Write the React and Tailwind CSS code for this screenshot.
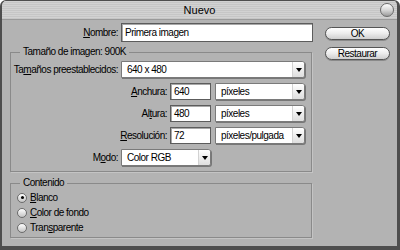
import React from 'react'

// Photoshop "Nuevo" (new document) dialog, Aqua-ish grey style

function Mn({ children }) {
    return <span className="underline underline-offset-[1px]">{children}</span>
}

function TextInput({ value, className = '' }) {
    return (
        <div
            className={`flex h-[17px] items-center border border-[#5c5c5c] bg-white px-[3px] shadow-[inset_1px_1px_0_#a8a8a8] ${className}`}
        >
            {value}
        </div>
    )
}

function Select({ value, className = '' }) {
    return (
        <div
            className={`flex h-[17px] rounded-r-[3px] border border-[#7a7a7a] bg-white shadow-[1px_1px_0_#777] ${className}`}
        >
            <div className="flex flex-1 items-center px-[5px]">{value}</div>
            <div className="flex w-[12px] items-center justify-center rounded-r-[2px] border-l border-[#d2d2d2] bg-gradient-to-b from-white to-[#dedede]">
                <span className="h-0 w-0 border-x-[3px] border-t-[4px] border-x-transparent border-t-black" />
            </div>
        </div>
    )
}

function Row({ label, children }) {
    return (
        <div className="flex h-[17px] items-center">
            <div className="w-[110px] pr-[3px] text-right whitespace-nowrap">{label}</div>
            {children}
        </div>
    )
}

function Radio({ checked, children }) {
    return (
        <div className="flex h-[15px] items-center gap-[3px] pl-[6px]">
            <span className="flex h-[10px] w-[10px] items-center justify-center rounded-full border border-[#6b6b6b] bg-gradient-to-b from-white to-[#c4c4c4]">
                {checked && <span className="h-[3px] w-[3px] rounded-full bg-black" />}
            </span>
            <span>{children}</span>
        </div>
    )
}

function PillButton({ children }) {
    return (
        <div className="flex h-[13px] w-[65px] items-center justify-center rounded-full border border-[#555] bg-gradient-to-b from-white via-[#ececec] to-[#cfcfcf] text-[10px] shadow-[0_1px_0_#8a8a8a]">
            {children}
        </div>
    )
}

export default function App() {
    return (
        <div className="flex h-[250px] w-[400px] flex-col overflow-hidden rounded-t-[6px] border-t border-r-[3px] border-b-[4px] border-l-[2px] border-[#4e4e4e] bg-[#b3b3b3] font-['Liberation_Sans',Arial,sans-serif] text-[10px] tracking-[-0.5px] text-black">
            {/* title bar */}
            <div className="relative flex h-[19px] shrink-0 items-center justify-center border-b border-[#9a9a9a] bg-[repeating-linear-gradient(0deg,#c6c6c6_0px,#c6c6c6_1px,#d2d2d2_1px,#d2d2d2_2px)]">
                <span className="text-[11px] tracking-normal">Nuevo</span>
                <span className="absolute top-[2px] right-[3px] h-[14px] w-[14px] rounded-full border border-[#6a6a6a] bg-gradient-to-b from-white via-[#d8d8d8] to-[#9c9c9c]" />
            </div>

            <div className="flex flex-1">
                {/* left column */}
                <div className="flex w-[316px] flex-col pt-[3px]">
                    <div className="flex h-[19px] items-center">
                        <div className="w-[119px] pr-[3px] text-right">
                            <Mn>N</Mn>ombre:
                        </div>
                        <TextInput value="Primera imagen" className="h-[19px] w-[192px]" />
                    </div>

                    <fieldset className="mt-[4px] ml-[8px] w-[302px] border border-[#8a8a8a] px-[0px] pt-[3px] pb-[5px] shadow-[1px_1px_0_#c4c4c4]">
                        <legend className="ml-[9px] px-[3px] leading-[12px]">Tamaño de imagen: 900K</legend>
                        <div className="flex flex-col gap-[5px]">
                            <Row
                                label={
                                    <>
                                        Ta<Mn>m</Mn>años preestablecidos:
                                    </>
                                }
                            >
                                <Select value="640 x 480" className="w-[184px]" />
                            </Row>
                            {[
                                [<><Mn>A</Mn>nchura:</>, '640', 'píxeles'],
                                [<>Al<Mn>t</Mn>ura:</>, '480', 'píxeles'],
                                [<><Mn>R</Mn>esolución:</>, '72', 'píxeles/pulgada'],
                            ].map(([label, num, unit], i) => (
                                <div key={i} className="flex h-[17px] items-center">
                                    <div className="w-[159px] pr-[3px] text-right">{label}</div>
                                    <TextInput value={num} className="w-[41px]" />
                                    <Select value={unit} className="ml-[4px] w-[90px]" />
                                </div>
                            ))}
                            <Row
                                label={
                                    <>
                                        M<Mn>o</Mn>do:
                                    </>
                                }
                            >
                                <Select value="Color RGB" className="w-[90px]" />
                            </Row>
                        </div>
                    </fieldset>

                    <fieldset className="mt-[5px] ml-[8px] w-[302px] border border-[#8a8a8a] pt-[1px] pb-[2px] shadow-[1px_1px_0_#c4c4c4]">
                        <legend className="ml-[9px] px-[3px] leading-[12px]">Contenido</legend>
                        <Radio checked>
                            <Mn>B</Mn>lanco
                        </Radio>
                        <Radio>
                            <Mn>C</Mn>olor de fondo
                        </Radio>
                        <Radio>
                            Tran<Mn>s</Mn>parente
                        </Radio>
                    </fieldset>
                </div>

                {/* right column */}
                <div className="flex flex-col gap-[7px] pt-[7px] pl-[7px]">
                    <PillButton>OK</PillButton>
                    <PillButton>Restaurar</PillButton>
                </div>
            </div>
        </div>
    )
}
